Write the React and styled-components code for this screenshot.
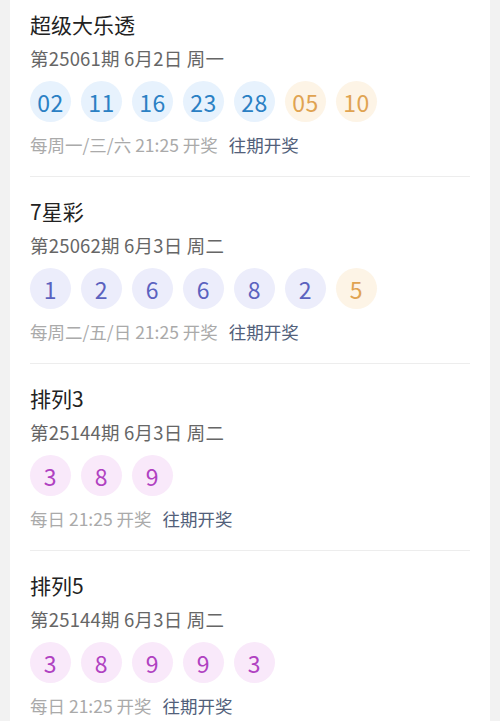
import styled, { createGlobalStyle } from "styled-components"

const GlobalStyle = createGlobalStyle`
  body {
    margin: 0;
    background: #f2f2f2;
    font-family: "Noto Sans CJK SC", "Noto Sans", sans-serif;
  }
`

const Page = styled.div`
  padding: 0 10px;
`

const Card = styled.div`
  background: #fff;
  padding: 0 20px;
`

const Section = styled.div`
  padding: 20px 0 20px;
  border-bottom: 1px solid #ededed;

  &:first-child {
    padding-top: 10px;
  }
  &:last-child {
    border-bottom: none;
  }
`

const Title = styled.div`
  font-size: 21px;
  line-height: 28px;
  color: #222;
`

const Issue = styled.div`
  margin-top: 8px;
  font-size: 18.5px;
  line-height: 24px;
  color: #666;
  letter-spacing: 0.2px;
`

const Balls = styled.div`
  display: flex;
  gap: 10px;
  margin-top: 11px;
`

const palette = {
  blue: { bg: "#e7f2fd", fg: "#2a80c4" },
  orange: { bg: "#fdf4e6", fg: "#e0a351" },
  indigo: { bg: "#ecedfb", fg: "#5b62bf" },
  violet: { bg: "#f9e9fa", fg: "#b041c1" },
}

const Ball = styled.div`
  width: 41px;
  height: 41px;
  border-radius: 50%;
  display: flex;
  align-items: center;
  justify-content: center;
  font-size: 23px;
  letter-spacing: 0.5px;
  background: ${(p) => palette[p.$tone].bg};
  color: ${(p) => palette[p.$tone].fg};
`

const Footer = styled.div`
  margin-top: 12px;
  font-size: 17.5px;
  line-height: 22px;
  color: #aaa;
  display: flex;
  gap: 11px;
`

const History = styled.span`
  color: #52607a;
`

const draws = [
  {
    name: "超级大乐透",
    issue: "第25061期 6月2日 周一",
    balls: [
      ["02", "blue"], ["11", "blue"], ["16", "blue"], ["23", "blue"], ["28", "blue"],
      ["05", "orange"], ["10", "orange"],
    ],
    schedule: "每周一/三/六 21:25 开奖",
  },
  {
    name: "7星彩",
    issue: "第25062期 6月3日 周二",
    balls: [
      ["1", "indigo"], ["2", "indigo"], ["6", "indigo"], ["6", "indigo"], ["8", "indigo"],
      ["2", "indigo"], ["5", "orange"],
    ],
    schedule: "每周二/五/日 21:25 开奖",
  },
  {
    name: "排列3",
    issue: "第25144期 6月3日 周二",
    balls: [["3", "violet"], ["8", "violet"], ["9", "violet"]],
    schedule: "每日 21:25 开奖",
  },
  {
    name: "排列5",
    issue: "第25144期 6月3日 周二",
    balls: [["3", "violet"], ["8", "violet"], ["9", "violet"], ["9", "violet"], ["3", "violet"]],
    schedule: "每日 21:25 开奖",
  },
]

const App = () => {
  return (
    <>
      <GlobalStyle />
      <Page>
        <Card>
          {draws.map((d) => (
            <Section key={d.name}>
              <Title>{d.name}</Title>
              <Issue>{d.issue}</Issue>
              <Balls>
                {d.balls.map(([n, tone], i) => (
                  <Ball key={i} $tone={tone}>{n}</Ball>
                ))}
              </Balls>
              <Footer>
                <span>{d.schedule}</span>
                <History>往期开奖</History>
              </Footer>
            </Section>
          ))}
        </Card>
      </Page>
    </>
  )
}

export default App
